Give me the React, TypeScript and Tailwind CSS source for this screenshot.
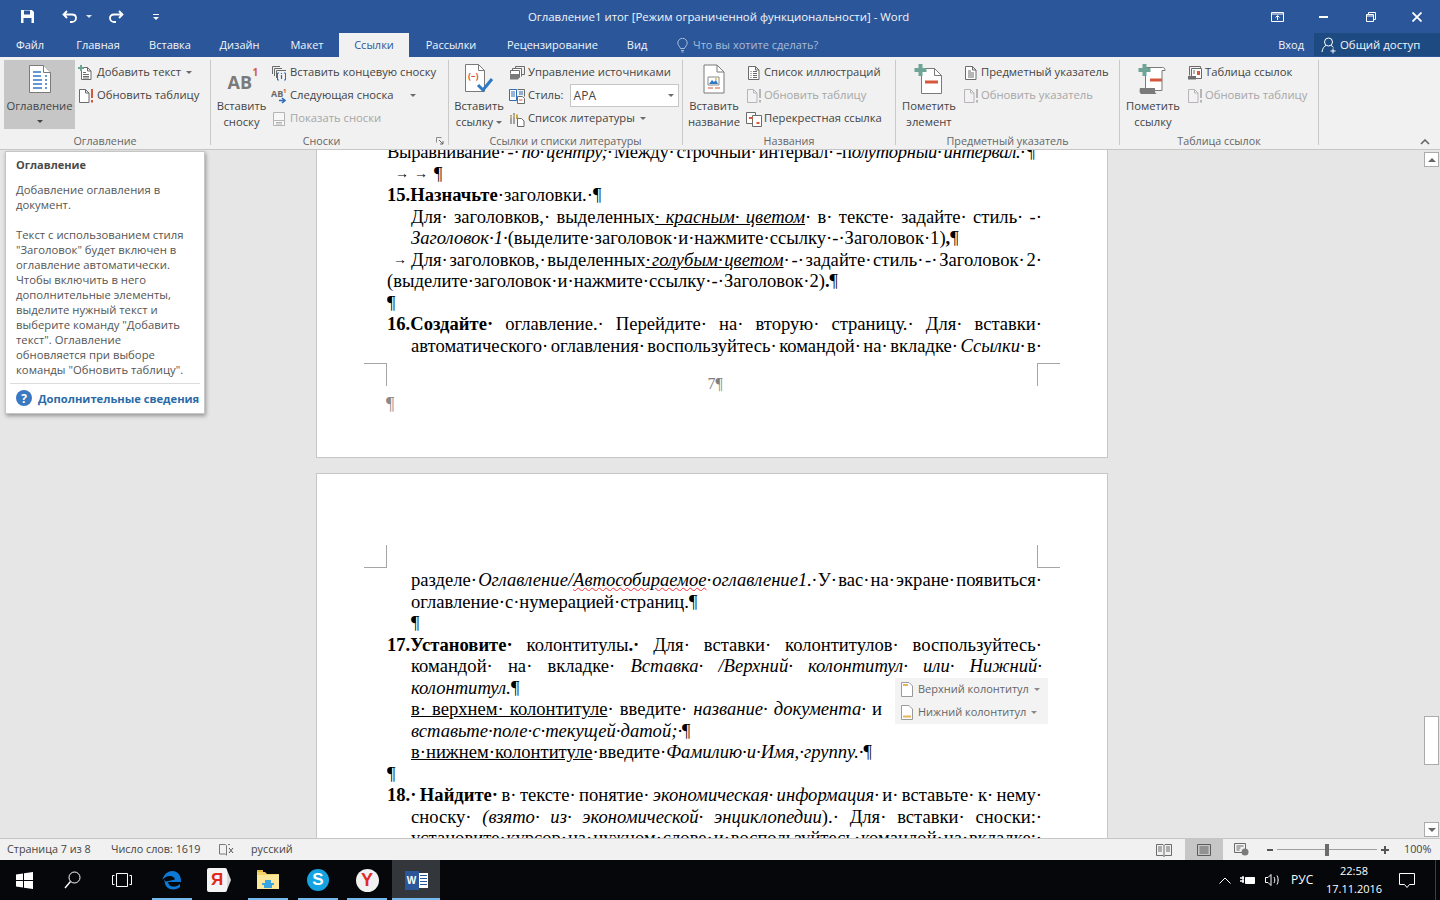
import React from "react";

// replaces spaces the way Word shows them with formatting marks on
const d = (s: string) => s.replace(/ /g, "\u00b7 ");

const G = "#6b6b6b";
const L = "#b5b5b5";
const BLUE = "#2f6db5";
const RED = "#d5583b";
const TEAL = "#6fa596";

const Svg = ({ w = 16, h = 16, children }: { w?: number; h?: number; children: React.ReactNode }) => (
  <svg width={w} height={h} viewBox={`0 0 ${w} ${h}`} fill="none" className="shrink-0">
    {children}
  </svg>
);

const AddTextIcon = () => (
  <Svg>
    <path d="M3.5 2.5h6L13 6v8.5H3.5z M9.5 2.5V6H13" stroke={G} fill="#fff" />
    <path d="M5 7.5h3M5 9.5h6M5 11.5h6M5 13h6" stroke={G} />
    <path d="M3 0v6M0 3h6" stroke={TEAL} strokeWidth="2" />
  </Svg>
);

const UpdateIcon = ({ off = false }: { off?: boolean }) => (
  <Svg>
    <path d="M1.5 1.5h6L11 5v9.5H1.5z M7.5 1.5V5H11" stroke={off ? L : G} fill={off ? "#f4f1f4" : "#fff"} />
    <path d="M14 1v9M14 12v2.5" stroke={off ? L : RED} strokeWidth="2" />
  </Svg>
);

const EndnoteIcon = () => (
  <Svg>
    <path d="M1.5 9V1.5H9M3.5 11V3.5H11M5.5 13V5.5H15" stroke={G} />
    <path d="M8 8H6.5v7H8M13 8h1.5v7H13" stroke={BLUE} />
    <path d="M10.5 8v1M10.5 10v4" stroke={BLUE} strokeWidth="1.2" />
  </Svg>
);

const NextNoteIcon = () => (
  <Svg>
    <text x="0" y="9" fontSize="9" fontWeight="700" fontFamily="Open Sans, sans-serif" fill={G}>AB</text>
    <text x="12" y="5" fontSize="6" fontWeight="700" fontFamily="Open Sans, sans-serif" fill={RED}>1</text>
    <path d="M8 12.5h6M11 10l3 2.5-3 2.5" stroke={BLUE} strokeWidth="1.6" />
  </Svg>
);

const ShowNotesIcon = () => (
  <Svg>
    <path d="M2.5 1.5h11v13h-11z" stroke={L} fill="#f7f7f7" />
    <path d="M2.5 9.5h11M5 11.5h6M5 13h6" stroke={L} />
  </Svg>
);

const ManageIcon = () => (
  <Svg>
    <path d="M6.5 4V1.5h9v8H13" stroke={G} />
    <path d="M3.5 6.5V3.5h9v8" stroke={G} fill="#fff" />
    <path d="M1.5 8.5V5.5h9v7" stroke={G} fill="#fff" />
    <path d="M1 9h9.5v3.5l-1.5 2H1z" fill="#7a7a7a" />
  </Svg>
);

const StyleIcon = () => (
  <Svg>
    <path d="M.5 1.5h7v11h-7z" stroke={BLUE} fill="#fff" />
    <path d="M8.5 1.5h7v7" stroke={G} />
    <path d="M2 4h4M2 6h4M2 8h4M10 4h4M10 6h4" stroke={BLUE} />
    <path d="M8.5 8.5h5l2 2v5h-7z" stroke={G} fill="#fff" />
    <path d="M10 12h3.5" stroke={RED} />
  </Svg>
);

const BiblioIcon = () => (
  <Svg>
    <path d="M1 4h2v9H1zM4 2h2v11H4z" fill="#a3a3a3" />
    <path d="M7 3.5h2V8H7z" fill="#d0a640" />
    <path d="M1 6h2M4 5h2" stroke="#e8c86a" />
    <path d="M8.5 7.5h4l2.5 2.5v5.5H8.5z" stroke={G} fill="#fff" />
  </Svg>
);

const IllustrationsIcon = () => (
  <Svg>
    <path d="M2.5 1.5h7l3.5 3.5v9.5H2.5z M9.5 1.5V5H13" stroke={G} fill="#fff" />
    <path d="M4.5 6.5h1M7 6.5h4M4.5 8.5h1M7 8.5h4M4.5 10.5h1M7 10.5h4M4.5 12.5h1M7 12.5h4" stroke={G} />
  </Svg>
);

const CrossRefIcon = () => (
  <Svg>
    <path d="M.5 1.5h9v11h-9z" stroke={G} fill="#fff" />
    <path d="M6.5 4.5h9v11h-9z" stroke={G} fill="#fff" />
    <path d="M3 7h4" stroke={RED} strokeWidth="2" />
    <path d="M10.5 12h3" stroke={RED} strokeWidth="2" />
  </Svg>
);

const IndexIcon = () => (
  <Svg>
    <path d="M2.5 1.5h7l3.5 3.5v9.5H2.5z M9.5 1.5V5H13" stroke={G} fill="#fff" />
    <path d="M5 6h3M5 8h6M5 10h6M5 12h6" stroke={G} />
  </Svg>
);

const CitationsIcon = () => (
  <Svg>
    <path d="M2.5 1.5h11v3M2.5 1.5v9" stroke={G} />
    <path d="M4.5 3.5h10v10h-10z" stroke={G} fill="#fff" />
    <path d="M6 6h2M6 8h2" stroke={G} />
    <path d="M10 6h3v4h-3z" fill={RED} />
    <path d="M1 11h8v3.5H1z" fill="#6f6f6f" />
  </Svg>
);

const TocIcon = () => (
  <svg width="24" height="30" viewBox="0 0 24 30" fill="none" className="shrink-0">
    <path d="M1.5 1.5h14l7 7v20H1.5z" stroke="#7a7a7a" fill="#fff" />
    <path d="M15.5 1.5v7h7" stroke="#7a7a7a" fill="#fff" />
    <path d="M5 8h8M5 12h8M5 16h9M5 20h9M5 24h9M17 12h2M17 16h2M17 20h2M17 24h2" stroke="#2f78c4" strokeWidth="1.5" />
  </svg>
);

const AbIcon = () => (
  <div className="relative h-[30px] w-[36px] font-bold">
    <span className="absolute left-[4px] top-[8px] text-[18px] leading-[20px] text-[#7a7a7a]">AB</span>
    <span className="absolute left-[29px] top-[2px] text-[10px] leading-[12px] text-[#d5583b]">1</span>
  </div>
);

const CiteIcon = () => (
  <svg width="30" height="32" viewBox="0 0 30 32" fill="none" className="shrink-0">
    <path d="M1.5 1.5h13l6 6v21H1.5z" stroke="#7a7a7a" fill="#fff" />
    <path d="M14.5 1.5v6h6" stroke="#7a7a7a" />
    <text x="4" y="16" fontSize="9" fontWeight="700" fontFamily="Open Sans, sans-serif" fill={RED}>(–)</text>
    <path d="M14 22l5 5 9-11" stroke="#2f78c4" strokeWidth="3" />
  </svg>
);

const CaptionIcon = () => (
  <svg width="22" height="30" viewBox="0 0 22 30" fill="none" className="shrink-0">
    <path d="M1 1h13l7 7v21H1z" stroke="#7a7a7a" fill="#fff" />
    <path d="M14 1v7h7" stroke="#7a7a7a" />
    <path d="M5 13h11v8H5z" stroke="#8a8a8a" />
    <path d="M6 20l3-4 2 2 2-2 2 4z" fill="#2f78c4" />
    <circle cx="13" cy="15" r="1" fill="#e9b44a" />
    <path d="M5 24h5M12 24h5" stroke={RED} />
  </svg>
);

const MarkEntryIcon = () => (
  <svg width="30" height="32" viewBox="0 0 30 32" fill="none" className="shrink-0">
    <path d="M7.5 5.5h13l7 7v18h-20z" stroke="#7a7a7a" fill="#fff" />
    <path d="M20.5 5.5v7h7" stroke="#7a7a7a" />
    <path d="M6.5 1v12M.5 7h12" stroke={TEAL} strokeWidth="4" />
    <path d="M11 19h13" stroke={RED} strokeWidth="3" />
  </svg>
);

const MarkCitationIcon = () => (
  <svg width="32" height="32" viewBox="0 0 32 32" fill="none" className="shrink-0">
    <path d="M8.5 4.5h17c2 0 2.5 1 2.5 3h-3v20H8.5z" stroke="#7a7a7a" fill="#fff" />
    <path d="M3 25h15v3c0 2 1 3 2 3H5c-2 0-3-2-2-6z" fill="#7a7a7a" />
    <path d="M7.5 1v12M1.5 7h12" stroke={TEAL} strokeWidth="4" />
    <path d="M13 17h12" stroke={RED} strokeWidth="3" />
  </svg>
);

const Caret = ({ c = "#6b6b6b" }: { c?: string }) => (
  <svg width="6" height="3" viewBox="0 0 6 3" className="shrink-0">
    <path d="M0 0h6L3 3z" fill={c} />
  </svg>
);

const Row = ({ icon, text, off = false, caret = false, gap = "gap-[3px]", caretGap = "ml-[2px]" }: {
  icon: React.ReactNode; text: string; off?: boolean; caret?: boolean; gap?: string; caretGap?: string;
}) => (
  <div className={`flex h-[23px] items-center whitespace-nowrap ${gap} ${off ? "text-[#a6a6a6]" : "text-[#444444]"}`}>
    {icon}
    <span>{text}</span>
    {caret && <span className={`flex ${caretGap}`}><Caret /></span>}
  </div>
);

const Big = ({ icon, top, bottom, width, caret = false, active = false }: {
  icon: React.ReactNode; top: string; bottom?: string; width: string; caret?: boolean; active?: boolean;
}) => (
  <div className={`flex h-[69px] shrink-0 flex-col items-center text-[#444444] ${width} ${active ? "bg-[#c6c6c6]" : ""}`}>
    <div className="flex h-[38px] shrink-0 items-center justify-center">{icon}</div>
    <div className="h-[16px] whitespace-nowrap leading-[16px]">{top}</div>
    {active ? (
      <div className="flex h-[14px] items-center"><Caret c="#444444" /></div>
    ) : (
      <div className="flex h-[16px] items-center gap-[3px] whitespace-nowrap leading-[16px]">
        {bottom}
        {caret && <Caret />}
      </div>
    )}
  </div>
);

const Group = ({ width, label, pad, children, launcher = false }: {
  width: string; label: string; pad: string; children: React.ReactNode; launcher?: boolean;
}) => (
  <div className={`relative h-[85px] shrink-0 border-r border-[#c9c9c9] ${width}`}>
    <div className={`flex h-[75px] ${pad}`}>{children}</div>
    <div className={`h-[10px] whitespace-nowrap text-center text-[10.75px] leading-[12px] text-[#666666] ${launcher ? "pr-[16px]" : ""}`}>{label}</div>
    {launcher && (
      <svg width="8" height="8" viewBox="0 0 8 8" className="absolute bottom-0 right-[4px]" fill="none">
        <path d="M.5 .5h5M.5 .5v5" stroke="#8a8a8a" />
        <path d="M3 3l4 4M7 4v3H4" stroke="#666666" />
      </svg>
    )}
  </div>
);

const Rows = ({ ml, children }: { ml: string; children: React.ReactNode }) => (
  <div className={`flex flex-col pt-[1px] ${ml}`}>{children}</div>
);

const TitleBar = () => (
  <div className="flex h-[33px] shrink-0 items-center bg-[#2b579a] text-white">
    <div className="flex w-[200px] items-center">
      <div className="ml-[20px] flex w-[15px]">
        <svg width="15" height="15" viewBox="0 0 15 15" fill="none">
          <path d="M1 1h11l2 2v11H1z" fill="#fff" />
          <path d="M4 1.5h6v4H4z" fill="#2b579a" />
          <path d="M3.5 9h8v5h-8z" fill="#2b579a" />
        </svg>
      </div>
      <div className="ml-[27px] flex items-center">
        <svg width="16" height="14" viewBox="0 0 16 14" fill="none">
          <path d="M5 1L1.5 4.5 5 8M2 4.5h8c3 0 4 2 4 3.5s-1 4-4 4H8" stroke="#fff" strokeWidth="1.8" />
        </svg>
      </div>
      <div className="ml-[8px]"><Caret c="#dfe6f1" /></div>
      <div className="ml-[16px] flex items-center">
        <svg width="16" height="14" viewBox="0 0 16 14" fill="none">
          <path d="M11 1l3.5 3.5L11 8M14 4.5H6C3 4.5 2 6.5 2 8s1 4 4 4h2" stroke="#fff" strokeWidth="1.8" />
        </svg>
      </div>
      <div className="ml-[29px] flex flex-col items-center gap-[2px]">
        <div className="h-px w-[6px] bg-white" />
        <Caret c="#ffffff" />
      </div>
    </div>
    <div className="ml-[328px] whitespace-nowrap text-[11.4px] text-[#f2f5fa]">
      Оглавление1 итог [Режим ограниченной функциональности] - Word
    </div>
    <div className="ml-auto flex items-center">
      <div className="flex w-[46px] justify-center">
        <svg width="13" height="10" viewBox="0 0 13 10" fill="none">
          <path d="M.5 .5h12v9H.5z M.5 2h12" stroke="#fff" />
          <path d="M6.5 8V4M4.5 5.5l2-2 2 2" stroke="#fff" />
        </svg>
      </div>
      <div className="flex w-[47px] justify-center">
        <div className="h-[2px] w-[9px] bg-white" />
      </div>
      <div className="flex w-[47px] justify-center">
        <svg width="10" height="10" viewBox="0 0 10 10" fill="none">
          <path d="M.5 2.5h7v7h-7zM.5 4h7M2.5 2.5v-2h7v7h-2" stroke="#fff" />
        </svg>
      </div>
      <div className="flex w-[46px] justify-center">
        <svg width="10" height="10" viewBox="0 0 10 10" fill="none">
          <path d="M.5 .5l9 9M9.5 .5l-9 9" stroke="#fff" strokeWidth="1.8" />
        </svg>
      </div>
    </div>
  </div>
);

const tabs = [
  { name: "Файл", w: "w-[60px]" },
  { name: "Главная", w: "w-[76px]" },
  { name: "Вставка", w: "w-[68px]" },
  { name: "Дизайн", w: "w-[71px]" },
  { name: "Макет", w: "w-[64px]" },
  { name: "Ссылки", w: "w-[70px]" },
  { name: "Рассылки", w: "w-[84px]" },
  { name: "Рецензирование", w: "w-[119px]" },
  { name: "Вид", w: "w-[50px]" },
];

const TabBar = () => (
  <div className="flex h-[24px] shrink-0 items-stretch bg-[#2b579a] text-[11px] text-[#f2f5fa]">
    {tabs.map((t) => (
      <div
        key={t.name}
        className={`flex items-center justify-center ${t.w} ${t.name === "Ссылки" ? "bg-[#f1f1f1] text-[#2b579a]" : ""}`}
      >
        {t.name}
      </div>
    ))}
    <div className="ml-[15px] flex items-center gap-[5px] text-[#a9bcd8]">
      <svg width="11" height="15" viewBox="0 0 11 15" fill="none">
        <path d="M3.5 10.5C3 8.5 .8 7.5 .8 5a4.7 4.7 0 0 1 9.4 0c0 2.5-2.2 3.5-2.7 5.5zM4 12.5h3M4.5 14h2" stroke="#a9bcd8" />
      </svg>
      Что вы хотите сделать?
    </div>
    <div className="ml-auto flex items-center">Вход</div>
    <div className="mb-[1px] ml-[10px] flex w-[126px] items-center gap-[3px] bg-[#1e4a82] pl-[7px] text-[11.4px]">
      <svg width="16" height="18" viewBox="0 0 16 18" fill="none">
        <circle cx="7.5" cy="6" r="4" stroke="#fff" />
        <path d="M1 16c.5-4 2.5-6 4-6.5M10 9.5c1 .3 1.8 1 2.3 2" stroke="#fff" />
        <path d="M12 12.5v5M9.5 15h5" stroke="#fff" />
      </svg>
      Общий доступ
    </div>
  </div>
);

const Ribbon = () => (
  <div className="relative flex h-[93px] shrink-0 border-b border-[#c6c6c6] bg-[#f1f1f1] pt-[3px] text-[11.25px]">
    <Group width="w-[211px]" label="Оглавление" pad="pl-[4px]">
      <Big active width="w-[71px]" icon={<TocIcon />} top="Оглавление" />
      <Rows ml="ml-[3px]">
        <Row icon={<AddTextIcon />} text="Добавить текст" caret />
        <Row icon={<UpdateIcon />} text="Обновить таблицу" />
      </Rows>
    </Group>
    <Group width="w-[238px]" label="Сноски" pad="pl-[2px]" launcher>
      <Big width="w-[57px]" icon={<AbIcon />} top="Вставить" bottom="сноску" />
      <Rows ml="ml-[1px]">
        <Row icon={<EndnoteIcon />} text="Вставить концевую сноску" />
        <Row icon={<NextNoteIcon />} text="Следующая сноска" caret caretGap="ml-[13px]" />
        <Row off icon={<ShowNotesIcon />} text="Показать сноски" />
      </Rows>
    </Group>
    <Group width="w-[234px]" label="Ссылки и списки литературы" pad="pl-[6px]">
      <Big width="w-[48px]" icon={<CiteIcon />} top="Вставить" bottom="ссылку" caret />
      <Rows ml="ml-[6px]">
        <Row icon={<ManageIcon />} text="Управление источниками" />
        <div className="flex h-[23px] items-center gap-[3px] text-[#444444]">
          <StyleIcon />
          <span>Стиль:</span>
          <div className="ml-[3px] flex h-[23px] w-[109px] items-center justify-between border border-[#c6c6c6] bg-white pl-[3px] pr-[4px] text-[12px]">
            <span>APA</span>
            <Caret />
          </div>
        </div>
        <Row icon={<BiblioIcon />} text="Список литературы" caret />
      </Rows>
    </Group>
    <Group width="w-[213px]" label="Названия" pad="pl-[7px]">
      <Big width="w-[48px]" icon={<CaptionIcon />} top="Вставить" bottom="название" />
      <Rows ml="ml-[8px]">
        <Row gap="gap-[2px]" icon={<IllustrationsIcon />} text="Список иллюстраций" />
        <Row gap="gap-[2px]" off icon={<UpdateIcon off />} text="Обновить таблицу" />
        <Row gap="gap-[2px]" icon={<CrossRefIcon />} text="Перекрестная ссылка" />
      </Rows>
    </Group>
    <Group width="w-[224px]" label="Предметный указатель" pad="pl-[6px]">
      <Big width="w-[54px]" icon={<MarkEntryIcon />} top="Пометить" bottom="элемент" />
      <Rows ml="ml-[7px]">
        <Row gap="gap-[2px]" icon={<IndexIcon />} text="Предметный указатель" />
        <Row gap="gap-[2px]" off icon={<UpdateIcon off />} text="Обновить указатель" />
      </Rows>
    </Group>
    <Group width="w-[199px]" label="Таблица ссылок" pad="pl-[6px]">
      <Big width="w-[54px]" icon={<MarkCitationIcon />} top="Пометить" bottom="ссылку" />
      <Rows ml="ml-[7px]">
        <Row gap="gap-[2px]" icon={<CitationsIcon />} text="Таблица ссылок" />
        <Row gap="gap-[2px]" off icon={<UpdateIcon off />} text="Обновить таблицу" />
      </Rows>
    </Group>
    <svg width="10" height="6" viewBox="0 0 10 6" fill="none" className="absolute bottom-[4px] right-[10px]">
      <path d="M1 5l4-4 4 4" stroke="#666666" strokeWidth="1.6" />
    </svg>
  </div>
);

const Line = ({ indent = false, justify = false, cut = "", children }: {
  indent?: boolean; justify?: boolean; cut?: string; children?: React.ReactNode;
}) => (
  <div
    className={`h-[21.5px] overflow-hidden leading-[21.5px] [word-spacing:-0.25em] ${indent ? "pl-[24px]" : ""} ${justify ? "[text-align-last:justify]" : ""} ${cut}`}
  >
    {children}
  </div>
);

const Arrow = ({ w }: { w: string }) => (
  <span className={`inline-block text-center align-[2px] text-[14px] font-bold leading-[14px] ${w}`}>→</span>
);

const PageOne = () => (
  <div className="flex h-[308px] w-[792px] shrink-0 flex-col justify-end overflow-hidden border-x border-b border-[#c6c6c6] bg-white pb-[42px]">
    <div className="shrink-0 pl-[70px] pr-[65px]">
      <Line justify cut="pr-[7px] tracking-[-0.3px]">
        {d("Выравнивание - ")}<i>{d("по центру; ")}</i>{d("Между строчный интервал -п")}<i>{d("олуторный интервал. ")}</i>¶
      </Line>
      <Line><Arrow w="w-[24px] pl-[6px]" /><Arrow w="w-[20px]" /><span className="ml-[3px]">¶</span></Line>
      <Line><b>15.Назначьте</b>{d(" заголовки. ")}¶</Line>
      <Line indent justify>
        {d("Для заголовков, выделенных")}<i className="underline">{d(" красным цветом")}</i>{d(" в тексте задайте стиль - ")}
      </Line>
      <Line indent>
        <i>{d("Заголовок 1 ")}</i>{d("(выделите заголовок и нажмите ссылку - Заголовок 1)")}<b>,</b>¶
      </Line>
      <Line justify>
        <Arrow w="w-[24px] pl-[6px]" />{d("Для заголовков, выделенных")}<i className="underline">{d(" голубым цветом")}</i>{d(" - задайте стиль - Заголовок 2 ")}
      </Line>
      <Line>{d("(выделите заголовок и нажмите ссылку - Заголовок 2)")}<b>.</b>¶</Line>
      <Line>¶</Line>
      <Line justify>
        <b>{d("16.Создайте ")}</b>{d("оглавление. Перейдите на вторую страницу. Для вставки ")}
      </Line>
      <Line indent justify>
        {d("автоматического оглавления воспользуйтесь командой на вкладке ")}<i>{d("Ссылки ")}</i>{d("в ")}
      </Line>
    </div>
    <div className="mt-[7px] flex h-[29px] shrink-0 justify-between px-[47px]">
      <div className="h-[23px] w-[23px] border-r border-t border-[#a6a6a6]" />
      <div className="ml-[6px] self-end text-[16px] leading-[17px] text-[#7f7f7f]">7¶</div>
      <div className="h-[23px] w-[23px] border-l border-t border-[#a6a6a6]" />
    </div>
    <div className="h-[23px] shrink-0 pl-[69px] leading-[23px] text-[#8a8a8a]">¶</div>
  </div>
);

const HeaderFooterChip = ({ label, bottom = false }: { label: string; bottom?: boolean }) => (
  <div className="flex h-[23px] items-center gap-[5px] pl-[6px] text-[#666666]">
    <svg width="12" height="15" viewBox="0 0 12 15" fill="none">
      <path d="M.5 .5H8L11.5 4v10.5H.5z" stroke="#9a9a9a" fill="#fff" />
      <path d={bottom ? "M2 11.5h8" : "M2 3h5"} stroke="#e5b45c" strokeWidth="2" />
    </svg>
    <span className="whitespace-nowrap text-[11px]">{label}</span>
    <Caret c="#8a8a8a" />
  </div>
);

const PageTwo = () => (
  <div className="relative h-[420px] w-[792px] shrink-0 border-x border-t border-[#c6c6c6] bg-white pt-[71px]">
    <div className="flex justify-between px-[47px]">
      <div className="h-[23px] w-[23px] border-b border-r border-[#a6a6a6]" />
      <div className="h-[23px] w-[23px] border-b border-l border-[#a6a6a6]" />
    </div>
    <div className="mt-px pl-[70px] pr-[65px]">
      <Line indent justify>
        {d("разделе ")}<i>{d("Оглавление/")}<span className="underline decoration-red-500 decoration-wavy decoration-1">Автособираемое</span>{d(" оглавление1. ")}</i>{d("У вас на экране появиться ")}
      </Line>
      <Line indent>{d("оглавление с нумерацией страниц.")}¶</Line>
      <Line indent>¶</Line>
      <Line justify>
        <b>{d("17.Установите ")}</b>{d("колонтитулы")}<b>{d(". ")}</b>{d("Для вставки колонтитулов воспользуйтесь ")}
      </Line>
      <Line indent justify>
        {d("командой на вкладке ")}<i>{d("Вставка /Верхний колонтитул или Нижний ")}</i>
      </Line>
      <Line indent><i>колонтитул.</i>¶</Line>
      <Line indent justify cut="pr-[160px]">
        <span className="underline">{d("в верхнем колонтитуле")}</span>{d(" введите ")}<i>{d("название документа ")}</i>и
      </Line>
      <Line indent><i>{d("вставьте поле с текущей датой; ")}</i>¶</Line>
      <Line indent>
        <span className="underline">{d("в нижнем колонтитуле")}</span>{d(" введите ")}<i>{d("Фамилию и Имя, группу. ")}</i>¶
      </Line>
      <Line>¶</Line>
      <Line justify>
        <b>{d("18. Найдите ")}</b>{d("в тексте понятие ")}<i>{d("экономическая информация ")}</i>{d("и вставьте к нему ")}
      </Line>
      <Line indent justify>
        {d("сноску ")}<i>{d("(взято из экономической энциклопедии")}</i>{d("). Для вставки сноски: ")}
      </Line>
      <Line indent justify>{d("установите курсор на нужном слове и воспользуйтесь командой на вкладке: ")}</Line>
    </div>
    <div className="absolute left-[578px] top-[204px] w-[153px] bg-[#f3f3f3] [font-family:'Open_Sans',sans-serif]">
      <HeaderFooterChip label="Верхний колонтитул" />
      <HeaderFooterChip label="Нижний колонтитул" bottom />
    </div>
  </div>
);

const Tooltip = () => (
  <div className="absolute left-[5px] top-[1px] h-[263px] w-[200px] border border-[#c6c6c6] bg-white pl-[10px] pt-[5px] text-[11.3px] leading-[15px] text-[#555555] shadow-[1px_2px_4px_rgba(0,0,0,0.35)]">
    <div className="text-[11px] font-bold text-[#4a4a4a]">Оглавление</div>
    <div className="mt-[10px]">
      <div>Добавление оглавления в</div>
      <div>документ.</div>
    </div>
    <div className="mt-[15px] whitespace-nowrap">
      <div>Текст с использованием стиля</div>
      <div>"Заголовок" будет включен в</div>
      <div>оглавление автоматически.</div>
      <div>Чтобы включить в него</div>
      <div>дополнительные элементы,</div>
      <div>выделите нужный текст и</div>
      <div>выберите команду "Добавить</div>
      <div>текст". Оглавление</div>
      <div>обновляется при выборе</div>
      <div>команды "Обновить таблицу".</div>
    </div>
    <div className="-ml-[6px] mr-[4px] mt-[6px] h-px bg-[#dcdcdc]" />
    <div className="mt-[6px] flex items-center gap-[6px] whitespace-nowrap font-bold text-[#2b6aa8]">
      <div className="flex h-[16px] w-[16px] items-center justify-center rounded-full bg-[#3b78c2] text-[12px] text-white">?</div>
      <span className="text-[11.2px]">Дополнительные сведения</span>
    </div>
  </div>
);

const Scrollbar = () => (
  <div className="flex w-[16px] shrink-0 flex-col pt-[2px]">
    <div className="flex h-[15px] w-[15px] items-center justify-center border border-[#ababab] bg-white">
      <svg width="8" height="4" viewBox="0 0 8 4"><path d="M0 4h8L4 0z" fill="#666666" /></svg>
    </div>
    <div className="mt-[549px] h-[49px] w-[15px] border border-[#ababab] bg-white" />
    <div className="mt-[57px] flex h-[15px] w-[15px] items-center justify-center border border-[#ababab] bg-white">
      <svg width="8" height="4" viewBox="0 0 8 4"><path d="M0 0h8L4 4z" fill="#666666" /></svg>
    </div>
  </div>
);

const StatusBar = () => (
  <div className="flex h-[22px] shrink-0 items-center border-t border-[#c6c6c6] bg-[#f1f1f1] text-[10.8px] text-[#444444]">
    <span className="ml-[7px] w-[104px] whitespace-nowrap">Страница 7 из 8</span>
    <span className="w-[108px] whitespace-nowrap">Число слов: 1619</span>
    <svg width="16" height="14" viewBox="0 0 16 14" fill="none">
      <path d="M.5 1.5h6l1 1V12l-1-1h-6zM7.5 2.5v10M9 1.5h2" stroke="#7a7a7a" />
      <path d="M10 5l4 5M14 5l-4 5" stroke="#555555" />
    </svg>
    <span className="ml-[16px]">русский</span>
    <div className="ml-auto flex h-full items-center">
      <svg width="16" height="14" viewBox="0 0 16 14" fill="none">
        <path d="M.5 1.5H7l1 1 1-1h6.5v11H9l-1 1-1-1H.5zM8 2.5v11M2 4h4M2 6h4M2 8h4M10 4h4M10 6h4M10 8h4" stroke="#6b6b6b" />
      </svg>
      <div className="ml-[13px] flex h-full w-[38px] items-center justify-center bg-[#c6c6c6]">
        <svg width="14" height="12" viewBox="0 0 14 12" fill="none">
          <path d="M.5 .5h13v11H.5zM2.5 3h9M2.5 5h9M2.5 7h9M2.5 9h9" stroke="#5c5c5c" />
        </svg>
      </div>
      <div className="ml-[11px]">
        <svg width="15" height="13" viewBox="0 0 15 13" fill="none">
          <path d="M.5 .5h11v9H.5zM2.5 3h7M2.5 5h4M2.5 7h3" stroke="#6b6b6b" />
          <circle cx="11" cy="9" r="3.5" fill="#7a7a7a" />
        </svg>
      </div>
      <div className="ml-[18px] h-[2px] w-[6px] bg-[#555555]" />
      <div className="relative ml-[4px] flex h-[12px] w-[100px] items-center justify-center">
        <div className="absolute inset-x-0 top-[5.5px] h-px bg-[#9f9f9f]" />
        <div className="relative h-[12px] w-[4px] bg-[#6b6b6b]" />
      </div>
      <div className="relative ml-[4px] h-[8px] w-[8px]">
        <div className="absolute left-0 top-[3px] h-[2px] w-[8px] bg-[#555555]" />
        <div className="absolute left-[3px] top-0 h-[8px] w-[2px] bg-[#555555]" />
      </div>
      <span className="ml-[15px] mr-[9px] w-[27px] whitespace-nowrap">100%</span>
    </div>
  </div>
);

const TaskIcon = ({ w, on = true, active = false, children }: {
  w: string; on?: boolean; active?: boolean; children: React.ReactNode;
}) => (
  <div className={`relative flex h-full shrink-0 items-center justify-center ${w} ${active ? "bg-[#33363a]" : ""}`}>
    {children}
    {on && <span className={`absolute bottom-0 h-[2px] bg-[#76b9ed] ${active ? "inset-x-0" : "w-[40px]"}`} />}
  </div>
);

const Taskbar = () => (
  <div className="flex h-[40px] shrink-0 items-center bg-[#05070b] text-white">
    <TaskIcon w="w-[48px]" on={false}>
      <svg width="17" height="17" viewBox="0 0 17 17">
        <path d="M0 2.5l7-1V8H0zM8 1.3L17 0v8H8zM0 9h7v6.5l-7-1zM8 9h9v8l-9-1.3z" fill="#fff" />
      </svg>
    </TaskIcon>
    <TaskIcon w="w-[48px]" on={false}>
      <svg width="17" height="18" viewBox="0 0 17 18" fill="none">
        <circle cx="10.5" cy="6.5" r="5.5" stroke="#fff" />
        <path d="M6.5 10.5L1 17" stroke="#fff" strokeWidth="1.4" />
      </svg>
    </TaskIcon>
    <TaskIcon w="w-[52px]" on={false}>
      <svg width="20" height="14" viewBox="0 0 20 14" fill="none">
        <path d="M4.5 .5h11v13h-11zM2.5 2.5h-2v9h2M17.5 2.5h2v9h-2" stroke="#fff" />
      </svg>
    </TaskIcon>
    <TaskIcon w="w-[48px]">
      <svg width="22" height="22" viewBox="0 0 22 22" fill="none">
        <path d="M3 13h17c.5-6-3-11-8.5-11C6 2 2 6.5 1.5 11 4 7.5 7 7 9 7c2.5 0 4.5 1.5 5 3.5" fill="#0e78d5" />
        <path d="M4 10c-1.5 6 2.5 10.5 8 10.5 3 0 5.5-1 7-2.5v-3c-2 2-4.5 2.5-6.5 2.5-3 0-5-1.5-5.5-4.5L3 12z" fill="#0e78d5" />
      </svg>
    </TaskIcon>
    <TaskIcon w="w-[46px]" on={false}>
      <div className="flex h-[24px] w-[20px] items-center justify-center rounded-[2px] bg-[#f4f4f4] [font-family:'Liberation_Sans',sans-serif] text-[17px] font-bold text-[#e0291c]">Я</div>
      <div className="h-0 w-0 border-y-[10px] border-l-[4px] border-y-transparent border-l-[#d8d8d8]" />
    </TaskIcon>
    <TaskIcon w="w-[52px]">
      <svg width="22" height="20" viewBox="0 0 22 20" fill="none">
        <path d="M0 2h8l2 2h12v15H0z" fill="#f3d36b" />
        <path d="M0 5h22v14H0z" fill="#fbe69a" />
        <path d="M0 0h6v2H0z" fill="#e6b83e" />
        <path d="M8 10h6v3h3v2h-2v3H7v-3H5v-2h3z" fill="#3aa5e0" />
      </svg>
    </TaskIcon>
    <TaskIcon w="w-[48px]">
      <div className="flex h-[22px] w-[22px] items-center justify-center rounded-full bg-[#14a3e0] [font-family:'Liberation_Sans',sans-serif] text-[17px] font-bold text-white">S</div>
    </TaskIcon>
    <TaskIcon w="w-[50px]">
      <div className="flex h-[23px] w-[23px] items-center justify-center rounded-full bg-[#f1f1f1] [font-family:'Liberation_Sans',sans-serif] text-[18px] font-bold text-[#e0292c]">Y</div>
    </TaskIcon>
    <TaskIcon w="w-[48px]" active>
      <div className="flex items-center">
        <div className="flex h-[19px] w-[14px] items-center justify-center bg-[#2b579a] [font-family:'Liberation_Sans',sans-serif] text-[10px] font-bold text-white">W</div>
        <div className="flex h-[15px] w-[9px] flex-col justify-center gap-[2px] bg-white px-[1px]">
          <div className="h-px bg-[#2b579a]" />
          <div className="h-px bg-[#2b579a]" />
          <div className="h-px bg-[#2b579a]" />
          <div className="h-px bg-[#2b579a]" />
        </div>
      </div>
    </TaskIcon>
    <div className="ml-auto flex h-full items-center">
      <svg width="12" height="7" viewBox="0 0 12 7" fill="none">
        <path d="M.5 6.5L6 1l5.5 5.5" stroke="#fff" />
      </svg>
      <svg width="16" height="12" viewBox="0 0 16 12" fill="none" className="ml-[9px]">
        <path d="M5.5 3.5h9v6h-9z" stroke="#fff" fill="#fff" />
        <path d="M0 4h4M0 7h4M3 2v7" stroke="#fff" strokeWidth="1.4" />
      </svg>
      <svg width="16" height="14" viewBox="0 0 16 14" fill="none" className="ml-[9px]">
        <path d="M.5 4.5H3l3-3v11l-3-3H.5z" stroke="#fff" />
        <path d="M9 4c1 1.5 1 4.5 0 6M12 2.5c1.5 2.5 1.5 6.5 0 9" stroke="#fff" />
      </svg>
      <span className="ml-[10px] w-[25px] text-[12px]">РУС</span>
      <div className="flex w-[76px] flex-col items-center text-[11px] leading-[18px]">
        <span>22:58</span>
        <span>17.11.2016</span>
      </div>
      <svg width="16" height="15" viewBox="0 0 16 15" fill="none" className="ml-[7px]">
        <path d="M.5 .5h15v11h-5L8 14.5l-2.5-3h-5z" stroke="#fff" />
      </svg>
      <div className="ml-[20px] mr-[4px] h-full w-px bg-[#3a3d42]" />
    </div>
  </div>
);

export default function App() {
  return (
    <div className="flex h-[900px] w-[1440px] flex-col overflow-hidden [font-family:'Open_Sans',sans-serif]">
      <TitleBar />
      <TabBar />
      <Ribbon />
      <div className="relative flex h-[688px] shrink-0 overflow-hidden bg-[#e6e6e6]">
        <div className="flex flex-1 flex-col items-center gap-[15px] overflow-hidden text-[18.6px] text-black [font-family:'Liberation_Serif',serif]">
          <PageOne />
          <PageTwo />
        </div>
        <Scrollbar />
        <Tooltip />
      </div>
      <StatusBar />
      <Taskbar />
    </div>
  );
}
